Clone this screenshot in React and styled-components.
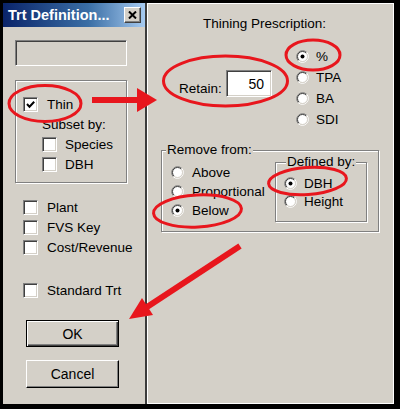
import React from 'react';
import styled, { createGlobalStyle } from 'styled-components';

const GlobalStyle = createGlobalStyle`
    html, body {
        margin: 0;
        padding: 0;
        background: #000;
    }
    body {
        font-family: 'Liberation Sans', Arial, sans-serif;
        font-size: 13.5px;
        color: #000;
    }
`;

const GRAY = '#d4d0c8';
const RED = '#e8161d';

// 바깥 검은 테두리
const Frame = styled.div`
    position: relative;
    width: 400px;
    height: 409px;
    box-sizing: border-box;
    padding: 3px 6px 5px 3px;
    background: #000;
    display: flex;
    flex-direction: row;
`;

// 왼쪽 대화상자
const LeftWindow = styled.div`
    width: 142px;
    background: ${GRAY};
    display: flex;
    flex-direction: column;
`;

const TitleBar = styled.div`
    height: 24px;
    display: flex;
    align-items: center;
    justify-content: space-between;
    padding: 0 4px 0 5px;
    background: linear-gradient(to right, #0a246a, #3a6ea5 60%, #a6caf0);
    color: #fff;
    font-weight: bold;
    font-size: 14.5px;
    white-space: nowrap;
`;

const CloseButton = styled.div`
    width: 17px;
    height: 16px;
    box-sizing: border-box;
    background: ${GRAY};
    border-top: 1px solid #fff;
    border-left: 1px solid #fff;
    border-right: 1px solid #404040;
    border-bottom: 1px solid #404040;
    box-shadow: inset -1px -1px 0 #808080;
    display: flex;
    align-items: center;
    justify-content: center;
`;

const LeftBody = styled.div`
    display: flex;
    flex-direction: column;
    padding: 0 12px;
`;

const EmptyField = styled.div`
    margin-top: 13px;
    width: 112px;
    height: 26px;
    box-sizing: border-box;
    border-top: 1px solid #808080;
    border-left: 1px solid #808080;
    border-right: 1px solid #fff;
    border-bottom: 1px solid #fff;
    box-shadow: inset 1px 1px 0 #404040, inset -1px -1px 0 ${GRAY};
`;

// 홈이 파인 그룹 상자
const GroupBox = styled.div`
    box-sizing: border-box;
    border: 1px solid #808080;
    box-shadow: inset 1px 1px 0 #fff, 1px 1px 0 #fff;
    display: flex;
    flex-direction: column;
    margin-top: ${p => p.$top || 0}px;
    margin-left: ${p => p.$left || 0}px;
    width: ${p => p.$width}px;
    padding-bottom: ${p => p.$bottom || 0}px;
`;

const GroupTitle = styled.span`
    align-self: flex-start;
    margin: -9px 0 0 ${p => p.$left || 4}px;
    padding: 0 1px;
    line-height: 16px;
    background: ${GRAY};
    white-space: nowrap;
`;

const Row = styled.div`
    display: flex;
    align-items: center;
    height: ${p => p.$h || 20}px;
    padding-left: ${p => p.$indent || 0}px;
    margin-top: ${p => p.$top || 0}px;
    gap: ${p => p.$gap || 9}px;
    white-space: nowrap;
`;

const CheckBox = styled.span`
    width: 15px;
    height: 15px;
    box-sizing: border-box;
    flex: none;
    background: #fff;
    border-top: 1px solid #808080;
    border-left: 1px solid #808080;
    border-right: 1px solid #fff;
    border-bottom: 1px solid #fff;
    box-shadow: inset 1px 1px 0 #404040, inset -1px -1px 0 ${GRAY};
    display: flex;
    align-items: center;
    justify-content: center;
`;

const Check = ({ checked }) => (
    <CheckBox>
        {checked && (
            <svg width="11" height="11" viewBox="0 0 11 11">
                <polyline points="2,5 4.5,7.8 9.2,2.8" fill="none" stroke="#000" strokeWidth="2" />
            </svg>
        )}
    </CheckBox>
);

const Radio = ({ checked }) => (
    <svg width="13" height="13" viewBox="0 0 13 13" style={{ flex: 'none' }}>
        <circle cx="6.5" cy="6.5" r="5" fill="#fff" />
        <path d="M2.26 10.74 A6 6 0 0 1 10.74 2.26" fill="none" stroke="#808080" />
        <path d="M10.74 2.26 A6 6 0 0 1 2.26 10.74" fill="none" stroke="#fff" />
        <path d="M2.96 10.04 A5 5 0 0 1 10.04 2.96" fill="none" stroke="#404040" />
        <path d="M10.04 2.96 A5 5 0 0 1 2.96 10.04" fill="none" stroke={GRAY} />
        {checked && <circle cx="6.5" cy="6.5" r="2" fill="#000" />}
    </svg>
);

const Button = styled.div`
    margin: ${p => p.$top}px 0 0 11px;
    width: 93px;
    height: ${p => p.$h}px;
    box-sizing: border-box;
    display: flex;
    align-items: center;
    justify-content: center;
    font-size: 14px;
    border-top: 1px solid ${p => (p.$default ? '#000' : '#fff')};
    border-left: 1px solid ${p => (p.$default ? '#000' : '#fff')};
    border-right: 1px solid #000;
    border-bottom: 1px solid #000;
    box-shadow: ${p => (p.$default
        ? 'inset 1px 1px 0 #fff, inset -1px -1px 0 #404040, inset -2px -2px 0 #808080'
        : 'inset -1px -1px 0 #808080')};
`;

// 가운데 구분선
const Divider = styled.div`
    width: 2px;
    background: #3c3c3c;
`;

// 오른쪽 패널
const RightPanel = styled.div`
    flex: 1;
    background: ${GRAY};
    border: 1px solid #fff;
    display: flex;
    flex-direction: column;
    padding-top: 12px;
`;

const Heading = styled.div`
    line-height: 16px;
    text-align: center;
    padding-right: 12px;
`;

const PrescriptionRow = styled.div`
    display: flex;
    align-items: flex-start;
    margin-top: 14px;
    padding-left: 31px;
`;

const RetainBox = styled.div`
    display: flex;
    align-items: flex-end;
    margin-top: 24px;
`;

const RetainLabel = styled.span`
    width: 47px;
    line-height: 16px;
`;

const NumberField = styled.div`
    width: 46px;
    height: 27px;
    box-sizing: border-box;
    background: #fff;
    border-top: 1px solid #808080;
    border-left: 1px solid #808080;
    border-right: 1px solid #fff;
    border-bottom: 1px solid #fff;
    box-shadow: inset 1px 1px 0 #404040, inset -1px -1px 0 ${GRAY};
    display: flex;
    align-items: center;
    justify-content: flex-end;
    padding-right: 7px;
    font-size: 14px;
`;

const RadioColumn = styled.div`
    display: flex;
    flex-direction: column;
    margin-left: ${p => p.$left || 0}px;
    padding-top: ${p => p.$top || 0}px;
    padding-left: ${p => p.$pad || 0}px;
    width: ${p => (p.$width ? `${p.$width}px` : 'auto')};
    box-sizing: border-box;
`;

const GroupRow = styled.div`
    display: flex;
    align-items: flex-start;
`;

const Annotations = styled.svg`
    position: absolute;
    left: 0;
    top: 0;
    pointer-events: none;
`;

const Marks = () => (
    <Annotations width="400" height="409" viewBox="0 0 400 409">
        <g fill="none" stroke={RED} strokeWidth="3">
            <ellipse cx="45" cy="103.5" rx="36" ry="18" />
            <ellipse cx="225.5" cy="81" rx="62" ry="25" />
            <ellipse cx="313" cy="55" rx="27" ry="15" />
            <ellipse cx="197.5" cy="211" rx="44" ry="16" transform="rotate(-3 197.5 211)" />
            <ellipse cx="307.5" cy="181" rx="39" ry="13.5" transform="rotate(-4 307.5 181)" />
        </g>
        <g fill={RED} stroke="none">
            <rect x="92" y="97" width="47" height="6" />
            <polygon points="137,88 157,100 137,112" />
            <line x1="240" y1="246" x2="147" y2="307" stroke={RED} strokeWidth="6" />
            <polygon points="129,319 153,315 142,298" />
        </g>
    </Annotations>
);

const App = () => {
    return (
        <>
            <GlobalStyle />
            <Frame>
                <LeftWindow>
                    <TitleBar>
                        <span>Trt Definition...</span>
                        <CloseButton>
                            <svg width="9" height="8" viewBox="0 0 9 8">
                                <path d="M1 0.5 L8 7.5 M8 0.5 L1 7.5" stroke="#000" strokeWidth="2" />
                            </svg>
                        </CloseButton>
                    </TitleBar>
                    <LeftBody>
                        <EmptyField />
                        <GroupBox $top={14} $width={112} $bottom={8}>
                            <Row $indent={7} $top={13}><Check checked />Thin</Row>
                            <Row $indent={26}>Subset by:</Row>
                            <Row $indent={26} $gap={8}><Check />Species</Row>
                            <Row $indent={26} $gap={8}><Check />DBH</Row>
                        </GroupBox>
                        <Row $indent={8} $top={14}><Check />Plant</Row>
                        <Row $indent={8}><Check />FVS Key</Row>
                        <Row $indent={8}><Check />Cost/Revenue</Row>
                        <Row $indent={8} $top={23}><Check />Standard Trt</Row>
                        <Button $default $top={20} $h={27}>OK</Button>
                        <Button $top={13} $h={28}>Cancel</Button>
                    </LeftBody>
                </LeftWindow>
                <Divider />
                <RightPanel>
                    <Heading>Thining Prescription:</Heading>
                    <PrescriptionRow>
                        <RetainBox>
                            <RetainLabel>Retain:</RetainLabel>
                            <NumberField>50</NumberField>
                        </RetainBox>
                        <RadioColumn $left={24}>
                            <Row $h={21} $gap={7}><Radio checked />%</Row>
                            <Row $h={21} $gap={7}><Radio />TPA</Row>
                            <Row $h={21} $gap={7}><Radio />BA</Row>
                            <Row $h={21} $gap={7}><Radio />SDI</Row>
                        </RadioColumn>
                    </PrescriptionRow>
                    <GroupBox $top={20} $left={13} $width={218} $bottom={9}>
                        <GroupTitle>Remove from:</GroupTitle>
                        <GroupRow>
                            <RadioColumn $top={5} $pad={9} $width={113}>
                                <Row $h={19} $gap={8}><Radio />Above</Row>
                                <Row $h={19} $gap={8}><Radio />Proportional</Row>
                                <Row $h={19} $gap={8}><Radio checked />Below</Row>
                            </RadioColumn>
                            <GroupBox $top={4} $width={92} $bottom={11}>
                                <GroupTitle $left={10}>Defined by:</GroupTitle>
                                <RadioColumn $top={4} $pad={8}>
                                    <Row $h={18} $gap={7}><Radio checked />DBH</Row>
                                    <Row $h={18} $gap={7}><Radio />Height</Row>
                                </RadioColumn>
                            </GroupBox>
                        </GroupRow>
                    </GroupBox>
                </RightPanel>
                <Marks />
            </Frame>
        </>
    );
};

export default App;
